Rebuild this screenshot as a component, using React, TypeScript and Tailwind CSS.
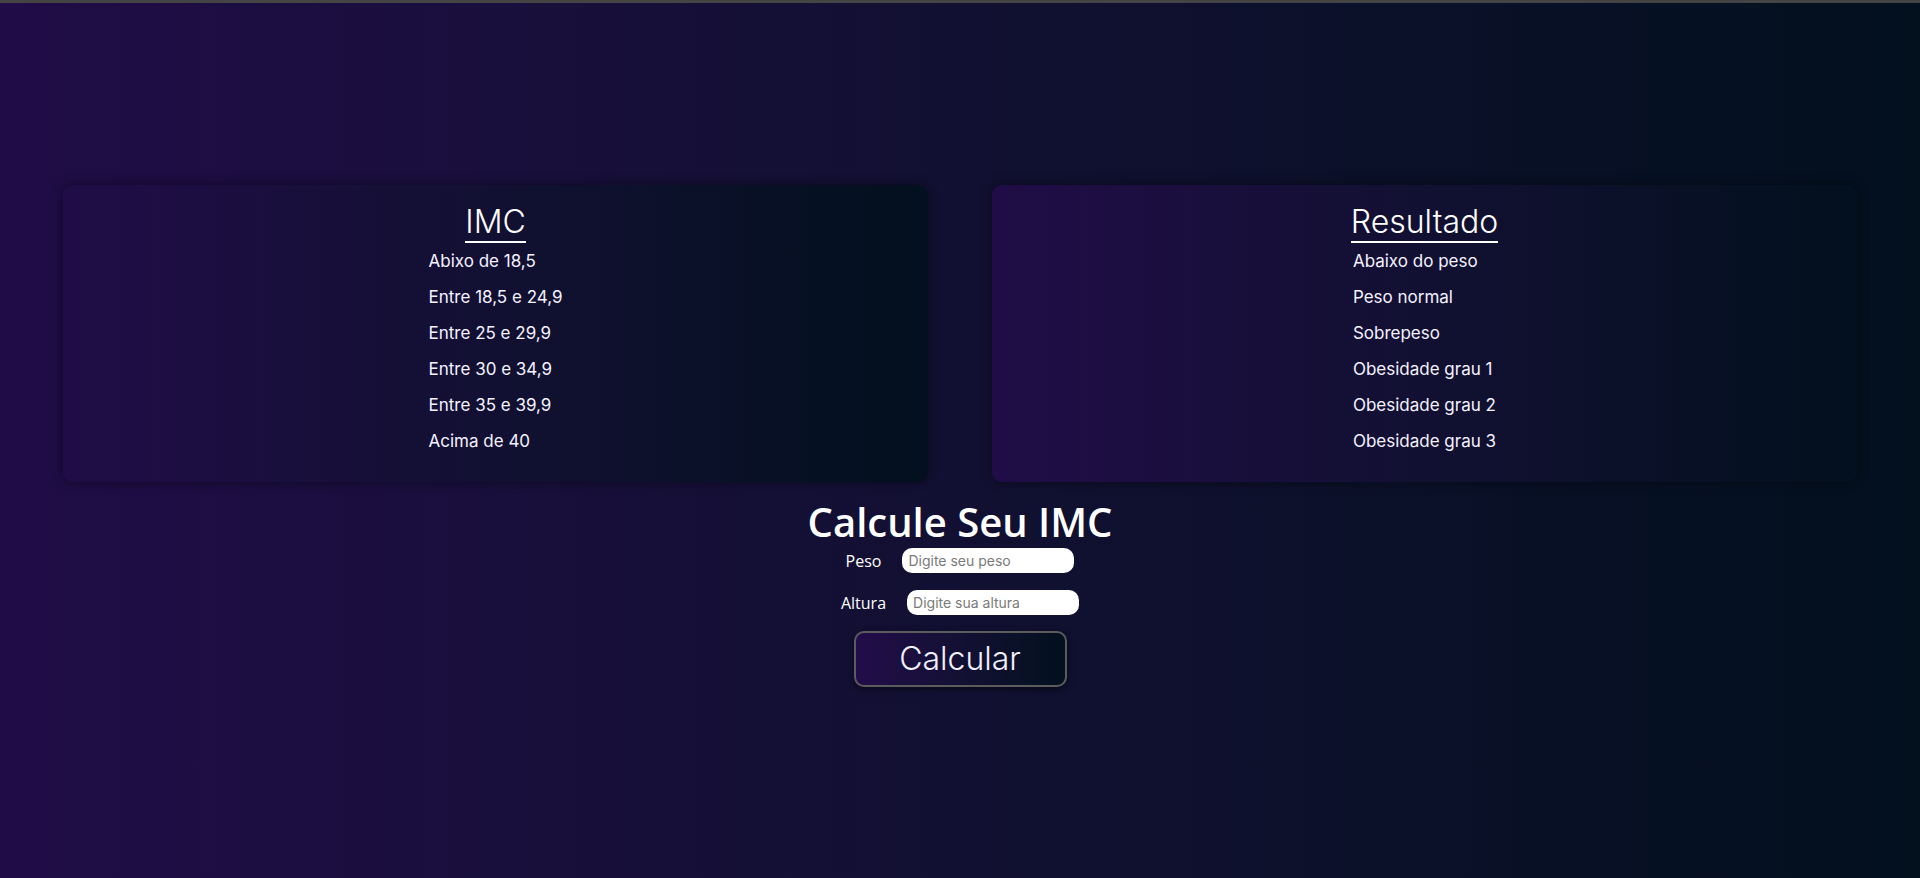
const faixas = [
  "Abixo de 18,5",
  "Entre 18,5 e 24,9",
  "Entre 25 e 29,9",
  "Entre 30 e 34,9",
  "Entre 35 e 39,9",
  "Acima de 40",
];

const resultados = [
  "Abaixo do peso",
  "Peso normal",
  "Sobrepeso",
  "Obesidade grau 1",
  "Obesidade grau 2",
  "Obesidade grau 3",
];

// card com título sublinhado e lista
const Tabela = ({ titulo, itens }: { titulo: string; itens: string[] }) => {
  return (
    <div className="flex-1 rounded-[10px] bg-gradient-to-r from-[#200c47] to-[#03101e] shadow-[0_0_12px_rgba(0,0,0,0.45)] pt-[17px] pb-[23px] flex flex-col items-center">
      <h2 className="inline-block border-b-2 border-white text-[32px] leading-[39px] font-light text-white font-['Inter',sans-serif]">
        {titulo}
      </h2>
      <ul className="flex flex-col items-start">
        {itens.map((item) => (
          <li
            key={item}
            className="text-[17px] leading-[36px] text-[#f4f2ff] font-['Inter',sans-serif]"
          >
            {item}
          </li>
        ))}
      </ul>
    </div>
  );
};

const Campo = ({ label, placeholder }: { label: string; placeholder: string }) => {
  return (
    <div className="flex items-center gap-[21px]">
      <label className="text-[16px] text-white font-['Open_Sans',sans-serif]">
        {label}
      </label>
      <input
        type="text"
        placeholder={placeholder}
        className="w-[172px] h-[25px] rounded-[10px] bg-white px-[6px] text-[14px] text-black placeholder:text-[#7a7a7a] outline-none font-['Inter',sans-serif]"
      />
    </div>
  );
};

export default function App() {
  return (
    <div className="min-h-screen w-full border-t-[3px] border-[#444444] bg-gradient-to-r from-[#200c47] to-[#03101e] pt-[182px]">
      <div className="flex gap-16 px-[63px]">
        <Tabela titulo="IMC" itens={faixas} />
        <Tabela titulo="Resultado" itens={resultados} />
      </div>

      <div className="flex flex-col items-center mt-[14px]">
        <h1 className="text-[40px] leading-[52px] font-semibold text-white font-['Open_Sans',sans-serif]">
          Calcule Seu IMC
        </h1>
        <div className="flex flex-col items-center gap-[17px]">
          <Campo label="Peso" placeholder="Digite seu peso" />
          <Campo label="Altura" placeholder="Digite sua altura" />
        </div>
        <button className="mt-[16px] w-[213px] h-[56px] rounded-[10px] border-2 border-[#5c5c5c] bg-gradient-to-r from-[#220c4a] to-[#03101e] text-[32px] font-light text-[#f2f0ff] shadow-[0_2px_6px_rgba(0,0,0,0.5)] font-['Inter',sans-serif]">
          Calcular
        </button>
      </div>
    </div>
  );
}
